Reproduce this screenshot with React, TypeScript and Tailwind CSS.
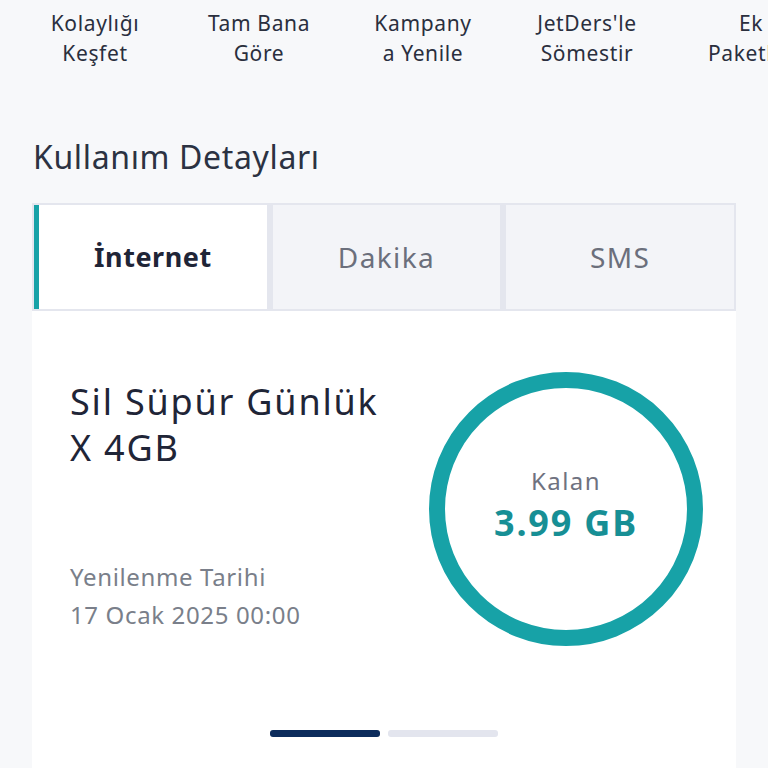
import React from "react";

const font = { fontFamily: "'Noto Sans', 'Open Sans', sans-serif" };

export default function App() {
  const nav = [
    ["Kolaylığı", "Keşfet"],
    ["Tam Bana", "Göre"],
    ["Kampany", "a Yenile"],
    ["JetDers'le", "Sömestir"],
    ["Ek", "Paketler"],
  ];
  return (
    <div className="w-[768px] h-[768px] overflow-hidden bg-[#f7f8fa] tracking-[0.04em]" style={font}>
      <div className="flex pl-[13px] pt-[8px]">
        {nav.map((n, i) => (
          <div key={i} className="w-[164px] shrink-0 text-center text-[21px] leading-[30px] text-[#2a2f3e] whitespace-nowrap">
            <div>{n[0]}</div>
            <div>{n[1]}</div>
          </div>
        ))}
      </div>
      <div className="mt-[69px] pl-[33px] text-[32px] leading-[40px] text-[#2b3242]">Kullanım Detayları</div>
      <div className="mx-[32px] mt-[26px] flex h-[108px] border-2 border-[#e4e6ee] bg-[#e4e6ee] gap-[6px]">
        <div className="flex-[1_1_0] flex items-center justify-center bg-white border-l-[5px] border-[#17a2a7] text-[27px] font-bold text-[#1f2537] tracking-[0.02em]">
          İnternet
        </div>
        <div className="flex-[1_1_0] flex items-center justify-center bg-[#f3f4f8] text-[28px] text-[#6b6f7c] tracking-[0.05em]">Dakika</div>
        <div className="flex-[1_1_0] flex items-center justify-center bg-[#f3f4f8] text-[28px] text-[#6b6f7c] tracking-[0.05em]">SMS</div>
      </div>
      <div className="mx-[32px] bg-white h-[460px] pt-[68px]">
        <div className="flex">
          <div className="pl-[38px] w-[389px] shrink-0">
            <div className="text-[36px] leading-[46px] text-[#1f2537] whitespace-nowrap tracking-[0.05em]">
              Sil Süpür Günlük
              <br />X 4GB
            </div>
            <div className="mt-[87px] text-[24px] leading-[38px] text-[#7a7f8a]">
              <div>Yenilenme Tarihi</div>
              <div>17 Ocak 2025 00:00</div>
            </div>
          </div>
          <div className="relative w-[290px] h-[290px] -mt-[15px] shrink-0">
            <svg width="290" height="290" viewBox="0 0 290 290" className="absolute inset-0">
              <circle cx="145" cy="145" r="129" fill="none" stroke="#17a2a7" strokeWidth="16" />
            </svg>
            <div className="absolute inset-0 flex flex-col items-center justify-center pb-[8px]">
              <div className="text-[24px] leading-[30px] text-[#6f7280] tracking-[0.06em]">Kalan</div>
              <div className="mt-[6px] text-[36px] leading-[42px] font-bold text-[#178f95] tracking-[0.05em]">3.99 GB</div>
            </div>
          </div>
        </div>
        <div className="flex justify-center gap-[8px] mt-[76px]">
          <div className="w-[110px] h-[7px] rounded-[3px] bg-[#0c2c5c]" />
          <div className="w-[110px] h-[7px] rounded-[3px] bg-[#e3e5ee]" />
        </div>
      </div>
    </div>
  );
}
